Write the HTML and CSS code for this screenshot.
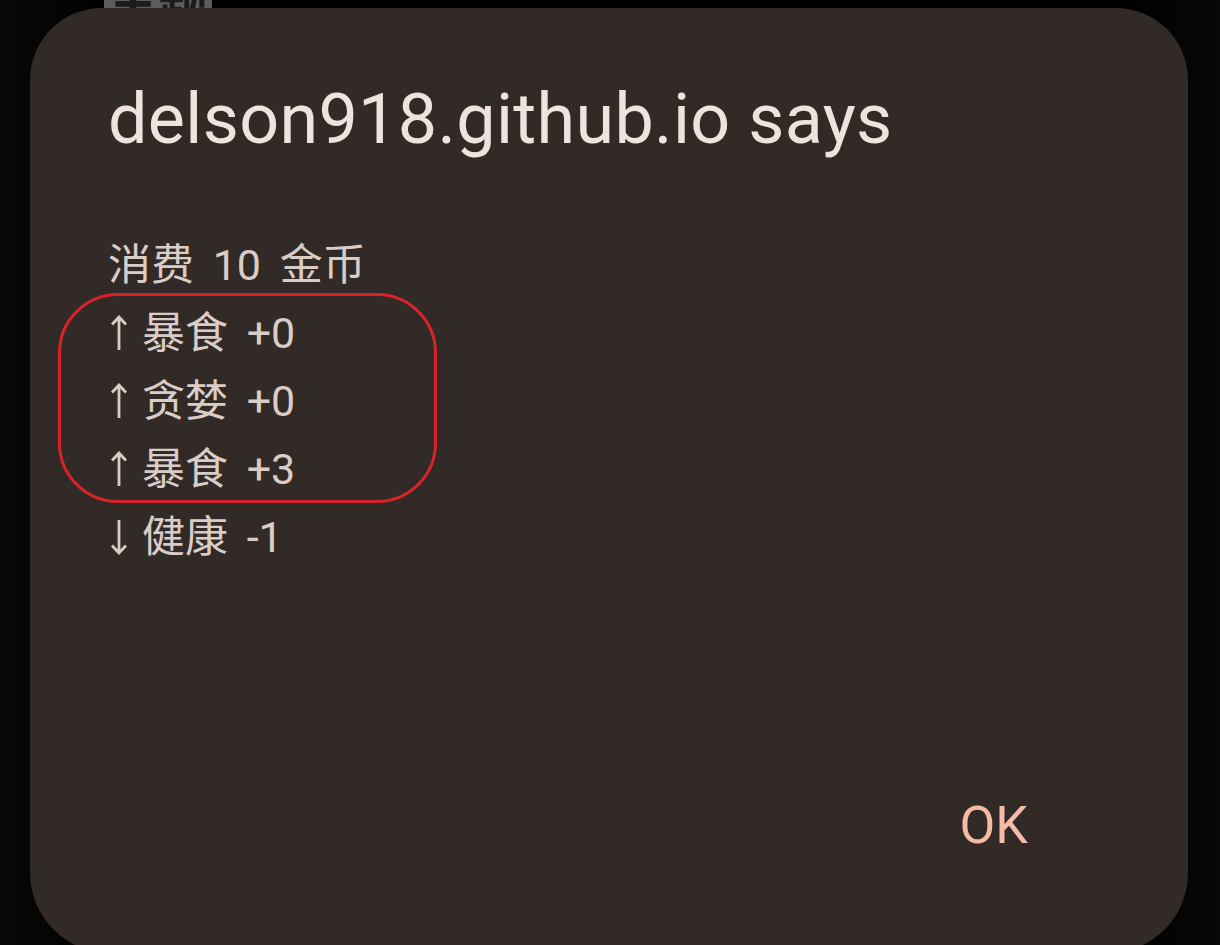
FILE: index.html
```html
<!DOCTYPE html>
<html lang="zh">
<head>
<meta charset="utf-8">
<link rel="stylesheet" href="styles.css">
</head>
<body>
<div class="backdrop">
  <div class="behind"><span class="behind-text">主题</span></div>
  <div class="dialog">
    <h1 class="title">delson918.github.io says</h1>
    <div class="message">
      <div class="line">消费 10 金币</div>
      <div class="group">
        <div class="line"><svg class="arrow" viewBox="0 0 20 36"><path d="M10 35V2M3 9.5L10 2L17 9.5" /></svg>暴食 +0</div>
        <div class="line"><svg class="arrow" viewBox="0 0 20 36"><path d="M10 35V2M3 9.5L10 2L17 9.5" /></svg>贪婪 +0</div>
        <div class="line"><svg class="arrow" viewBox="0 0 20 36"><path d="M10 35V2M3 9.5L10 2L17 9.5" /></svg>暴食 +3</div>
        <div class="ring"></div>
      </div>
      <div class="line"><svg class="arrow" viewBox="0 0 20 36"><path d="M10 1V34M3 26.5L10 34L17 26.5" /></svg>健康 -1</div>
    </div>
    <div class="actions"><span class="ok">OK</span></div>
  </div>
</div>
</body>
</html>
```
FILE: styles.css
```css
html, body {
  margin: 0;
  padding: 0;
  background: #000;
  overflow: hidden;
}
.backdrop {
  position: relative;
  width: 1220px;
  height: 945px;
  background: linear-gradient(90deg, #080808 0%, #000 9%, #000 91%, #070707 100%);
  padding-top: 8px;
  padding-left: 30px;
  box-sizing: border-box;
}
.behind {
  position: absolute;
  left: 104px;
  top: -30px;
  width: 108px;
  height: 40px;
  background: #5c5c5c;
  display: flex;
  align-items: flex-end;
  justify-content: center;
  overflow: hidden;
}
.behind-text {
  font-family: "Noto Sans CJK SC", sans-serif;
  font-size: 50px;
  font-weight: 700;
  color: #1c1c1c;
  line-height: 1;
  margin-bottom: -12px;
}
.dialog {
  position: relative;
  width: 1158px;
  height: 945px;
  background: #322a26;
  border-radius: 72px 72px 80px 80px;
  padding: 0 0 0 78px;
  box-sizing: border-box;
  display: flex;
  flex-direction: column;
  font-family: "Roboto", "Noto Sans CJK SC", sans-serif;
}
.title {
  margin: 0;
  padding-top: 71px;
  font-weight: 400;
  font-size: 70px;
  line-height: 80px;
  color: #efe3de;
  letter-spacing: 0.35px;
}
.message {
  margin-top: 72px;
  font-size: 43px;
  line-height: 68px;
  color: #dacdc8;
  word-spacing: 8px;
}
.line {
  display: flex;
  align-items: center;
  height: 68px;
}
.group {
  position: relative;
}
.ring {
  position: absolute;
  left: -50px;
  top: -6px;
  width: 379px;
  height: 210px;
  border: 3px solid #d8232b;
  border-radius: 60px;
  box-sizing: border-box;
}
.arrow {
  width: 20px;
  height: 36px;
  margin-right: 13px;
  margin-left: 1px;
  fill: none;
  stroke: #dacdc8;
  stroke-width: 2.8;
}
.actions {
  margin-top: auto;
  margin-bottom: 97px;
  padding-right: 160px;
  display: flex;
  justify-content: flex-end;
}
.ok {
  font-size: 52px;
  font-weight: 400;
  color: #f6bba7;
  line-height: 60px;
}
```
